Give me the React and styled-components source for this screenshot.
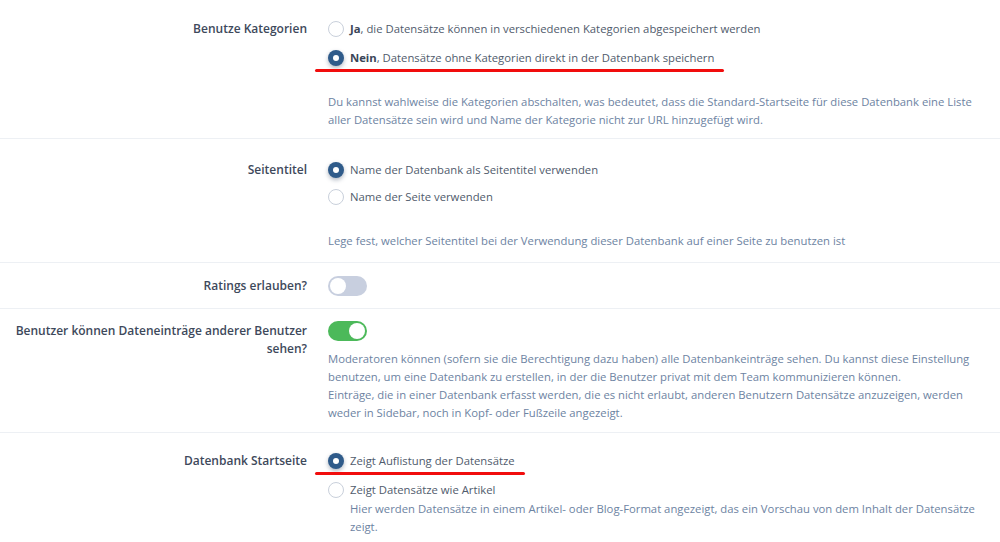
import styled, { createGlobalStyle } from "styled-components";

const GlobalStyle = createGlobalStyle`
  html, body {
    margin: 0;
    padding: 0;
    background: #ffffff;
  }
  body {
    font-family: "Open Sans", "Liberation Sans", sans-serif;
    font-size: 11.3px;
    color: #4b5567;
  }
`;

const Page = styled.div`
  width: 1000px;
  height: 542px;
  overflow: hidden;
  background: #fff;
`;

const Row = styled.div`
  display: grid;
  grid-template-columns: 307px 1fr;
  column-gap: 21px;
  padding: ${({ $pad }) => $pad || "20px 15px 10px 0"};
  border-bottom: 1px solid #edf0f4;
  &:last-child {
    border-bottom: none;
  }
`;

const Label = styled.div`
  text-align: right;
  font-weight: 600;
  font-size: 12px;
  line-height: 18px;
  padding-top: 1px;
  color: #3e495b;
`;

const Content = styled.div`
  display: flex;
  flex-direction: column;
  align-items: flex-start;
  gap: ${({ $gap }) => $gap || "0px"};
`;

const Option = styled.label`
  position: relative;
  display: inline-flex;
  align-items: center;
  gap: 6px;
  height: 20px;
  line-height: 20px;
  color: #505b6c;
  b {
    font-weight: 700;
    color: #3a4557;
  }
  ${({ $marked }) =>
    $marked &&
    `
    &::after {
      content: "";
      position: absolute;
      left: -13px;
      right: -10px;
      bottom: -4px;
      height: 3px;
      border-radius: 2px;
      background: #f10d0d;
    }
  `}
`;

const Radio = styled.span`
  flex: none;
  box-sizing: border-box;
  width: 16px;
  height: 16px;
  border-radius: 50%;
  background: ${({ $on }) => ($on ? "#2f5b8a" : "#fff")};
  border: ${({ $on }) => ($on ? "none" : "1px solid #c9d0db")};
  box-shadow: ${({ $on }) =>
    $on ? "0 2px 4px rgba(30, 50, 80, 0.35)" : "none"};
  display: flex;
  align-items: center;
  justify-content: center;
  &::after {
    content: "";
    display: ${({ $on }) => ($on ? "block" : "none")};
    width: 6px;
    height: 6px;
    border-radius: 50%;
    background: #fff;
  }
`;

const Toggle = styled.span`
  position: relative;
  display: block;
  box-sizing: border-box;
  width: 39px;
  height: 20px;
  border-radius: 10px;
  background: ${({ $on }) => ($on ? "#4cb95a" : "#c8cfdf")};
  &::after {
    content: "";
    position: absolute;
    top: 2px;
    left: ${({ $on }) => ($on ? "21px" : "2px")};
    width: 16px;
    height: 16px;
    border-radius: 50%;
    background: #fff;
  }
`;

const Help = styled.p`
  margin: ${({ $top }) => $top || "0"} 0 0;
  padding-left: ${({ $indent }) => ($indent ? "22px" : "0")};
  font-size: 11.3px;
  line-height: 18px;
  color: #6d83a2;
  max-width: 652px;
`;

const OptionBlock = styled.div`
  display: flex;
  flex-direction: column;
  align-items: flex-start;
`;

export default function App() {
  return (
    <Page>
      <GlobalStyle />
      <Row $pad="19px 15px 9px 0">
        <Label>Benutze Kategorien</Label>
        <Content $gap="9px">
          <Option>
            <Radio />
            <span>
              <b>Ja</b>, die Datensätze können in verschiedenen Kategorien
              abgespeichert werden
            </span>
          </Option>
          <Option $marked>
            <Radio $on />
            <span>
              <b>Nein</b>, Datensätze ohne Kategorien direkt in der Datenbank
              speichern
            </span>
          </Option>
          <Help $top="16px">
            Du kannst wahlweise die Kategorien abschalten, was bedeutet, dass
            die Standard-Startseite für diese Datenbank eine Liste aller
            Datensätze sein wird und Name der Kategorie nicht zur URL
            hinzugefügt wird.
          </Help>
        </Content>
      </Row>

      <Row $pad="21px 15px 12px 0">
        <Label>Seitentitel</Label>
        <Content $gap="7px">
          <Option>
            <Radio $on />
            <span>Name der Datenbank als Seitentitel verwenden</span>
          </Option>
          <Option>
            <Radio />
            <span>Name der Seite verwenden</span>
          </Option>
          <Help $top="18px">
            Lege fest, welcher Seitentitel bei der Verwendung dieser Datenbank
            auf einer Seite zu benutzen ist
          </Help>
        </Content>
      </Row>

      <Row $pad="13px 15px 12px 0">
        <Label>Ratings erlauben?</Label>
        <Content>
          <Toggle />
        </Content>
      </Row>

      <Row $pad="12px 15px 10px 0">
        <Label>Benutzer können Dateneinträge anderer Benutzer sehen?</Label>
        <Content>
          <Toggle $on />
          <Help $top="9px">
            Moderatoren können (sofern sie die Berechtigung dazu haben) alle
            Datenbankeinträge sehen. Du kannst diese Einstellung benutzen, um
            eine Datenbank zu erstellen, in der die Benutzer privat mit dem
            Team kommunizieren können.
            <br />
            Einträge, die in einer Datenbank erfasst werden, die es nicht
            erlaubt, anderen Benutzern Datensätze anzuzeigen, werden weder in
            Sidebar, noch in Kopf- oder Fußzeile angezeigt.
          </Help>
        </Content>
      </Row>

      <Row $pad="18px 15px 10px 0">
        <Label>Datenbank Startseite</Label>
        <Content $gap="9px">
          <Option $marked>
            <Radio $on />
            <span>Zeigt Auflistung der Datensätze</span>
          </Option>
          <OptionBlock>
            <Option>
              <Radio />
              <span>Zeigt Datensätze wie Artikel</span>
            </Option>
            <Help $indent>
              Hier werden Datensätze in einem Artikel- oder Blog-Format
              angezeigt, das ein Vorschau von dem Inhalt der Datensätze zeigt.
            </Help>
          </OptionBlock>
        </Content>
      </Row>
    </Page>
  );
}
